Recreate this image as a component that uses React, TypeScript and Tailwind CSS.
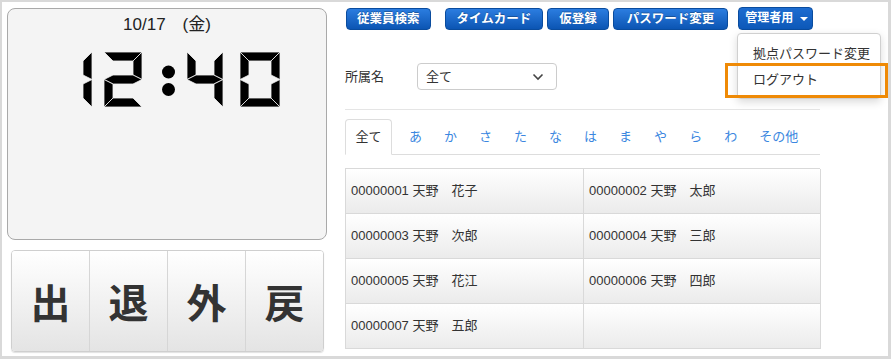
import React from "react";

type Pt = [number, number];

const FONT = { fontFamily: '"Liberation Sans", "Noto Sans CJK JP", sans-serif' };

// 7-segment polygons for a digit box w x h with segment thickness t
const segPolys = (w: number, h: number, t: number): Record<string, Pt[]> => {
  const m = h / 2;
  const s = t / 2;
  return {
    a: [[0, 0], [w, 0], [w - t, t], [t, t]],
    b: [[w, 0], [w, m], [w - t, m - s], [w - t, t]],
    c: [[w, m], [w, h], [w - t, h - t], [w - t, m + s]],
    d: [[0, h], [t, h - t], [w - t, h - t], [w, h]],
    e: [[0, m], [t, m + s], [t, h - t], [0, h]],
    f: [[0, 0], [t, t], [t, m - s], [0, m]],
    g: [[0, m], [t, m - s], [w - t, m - s], [w, m], [w - t, m + s], [t, m + s]],
  };
};

const Digit = ({ x, w, on }: { x: number; w: number; on: string }) => {
  const polys = segPolys(w, 55, 9);
  return (
    <g transform={`translate(${x},0)`}>
      {on.split("").map((k) => (
        <polygon
          key={k}
          points={polys[k].map((p) => p.join(",")).join(" ")}
          fill="#000"
          stroke="#f4f4f4"
          strokeWidth={0.8}
        />
      ))}
    </g>
  );
};

const Clock = () => (
  <svg width="202" height="56" viewBox="0 0 202 56" className="block ml-[72px] mt-[17px]" aria-label="12:40">
    <title>12:40</title>
    <Digit x={2} w={10} on="bc" />
    <Digit x={24} w={38} on="abged" />
    <circle cx="88.5" cy="20" r="6.5" fill="#000" />
    <circle cx="88.5" cy="37.5" r="6.5" fill="#000" />
    <Digit x={107} w={36} on="fgbc" />
    <Digit x={160} w={40} on="abcdef" />
  </svg>
);

const blueBtn =
  "shrink-0 whitespace-nowrap h-[22px] rounded-[4px] border border-[#0a4c9e] bg-gradient-to-b from-[#2b7de0] to-[#0b55b3] text-white text-[12.5px] font-bold leading-[20px] [text-shadow:0_-1px_0_rgba(0,0,0,0.25)]";

const kana = ["あ", "か", "さ", "た", "な", "は", "ま", "や", "ら", "わ", "その他"];

const staff: (string | null)[] = [
  "00000001 天野　花子",
  "00000002 天野　太郎",
  "00000003 天野　次郎",
  "00000004 天野　三郎",
  "00000005 天野　花江",
  "00000006 天野　四郎",
  "00000007 天野　五郎",
  null,
];

export default function App() {
  return (
    <div
      className="relative w-[891px] h-[359px] overflow-hidden bg-white border-l-2 border-t-2 border-r-[3px] border-b-[3px] border-[#d9d9d9] flex text-[#333]"
      style={FONT}
    >
      {/* left: clock + stamp buttons */}
      <div className="w-[343px] shrink-0 pl-[5px] pt-[6px]">
        <div className="w-[320px] h-[232px] rounded-[8px] border border-[#a9a9a9] bg-[#f4f4f4] pt-[6px]">
          <div className="text-center text-[17px] leading-[20px] text-[#222]">10/17　(金)</div>
          <Clock />
        </div>
        <div className="mt-[10px] ml-[4px] w-[313px] h-[102px] flex rounded-[4px] border border-[#cfcfcf] overflow-hidden shadow-[0_1px_1px_rgba(0,0,0,0.12)]">
          {["出", "退", "外", "戻"].map((c, i) => (
            <div
              key={c}
              className={`flex-1 flex items-center justify-center bg-gradient-to-b from-[#ffffff] to-[#e4e4e4] text-[40px] font-bold text-[#333] ${
                i > 0 ? "border-l border-[#d6d6d6]" : ""
              }`}
              style={{ fontFamily: '"Noto Sans CJK JP", sans-serif' }}
            >
              {c}
            </div>
          ))}
        </div>
      </div>

      {/* right: menu, filter, tabs, table */}
      <div className="w-[475px] shrink-0 pt-[5px]">
        <div className="flex items-center w-[540px]">
          <button className={`${blueBtn} px-[10px] ml-[1px]`}>従業員検索</button>
          <button className={`${blueBtn} px-[11px] ml-[14px]`}>タイムカード</button>
          <button className={`${blueBtn} px-[11px] ml-[4px]`}>仮登録</button>
          <button className={`${blueBtn} px-[13px] ml-[4px]`}>パスワード変更</button>
          <button className="shrink-0 whitespace-nowrap ml-[10px] h-[23px] pl-[6px] pr-[4px] rounded-[4px] border border-[#0a4c9e] bg-gradient-to-b from-[#1d6cd0] to-[#0c58b8] text-white text-[12px] font-bold leading-[21px] flex items-center">
            管理者用
            <span className="ml-[7px] w-0 h-0 border-l-[4px] border-r-[4px] border-t-[4px] border-l-transparent border-r-transparent border-t-white" />
          </button>
        </div>

        <div className="flex items-center mt-[33px] h-[27px] text-[13px]">
          <span className="w-[72px]">所属名</span>
          <div className="w-[140px] h-[27px] rounded-[4px] border border-[#cccccc] flex items-center pl-[8px] pr-[12px] justify-between">
            <span>全て</span>
            <svg width="12" height="8" viewBox="0 0 12 8">
              <path d="M1.5 1.5 L6 6 L10.5 1.5" fill="none" stroke="#444" strokeWidth="1.6" />
            </svg>
          </div>
        </div>

        <div className="mt-[19px] border-t border-[#e5e5e5]" />

        <div className="mt-[9px] flex items-end h-[36px] border-b border-[#dddddd] text-[13px]">
          <div className="h-[36px] w-[47px] -mb-px rounded-t-[4px] border border-[#dddddd] border-b-white bg-white flex items-center justify-center text-[#333]">
            全て
          </div>
          <div className="flex ml-[6px] text-[#3b87e0]">
            {kana.map((k) => (
              <span key={k} className="h-[35px] px-[11px] flex items-center">
                {k}
              </span>
            ))}
          </div>
        </div>

        <div className="mt-[13px] grid grid-cols-[238px_237px] border-l border-t border-[#d9d9d9] text-[13px]">
          {staff.map((s, i) => (
            <div
              key={i}
              className="h-[45px] border-r border-b border-[#d9d9d9] bg-gradient-to-b from-[#ffffff] to-[#ebebeb] flex items-center pl-[5px] text-[#333]"
            >
              {s}
            </div>
          ))}
        </div>
      </div>

      {/* open admin dropdown */}
      <div className="absolute left-[735px] top-[31px] w-[144px] h-[66px] rounded-[4px] border border-[#d0d0d0] bg-white shadow-[0_3px_8px_rgba(0,0,0,0.15)] text-[13px] text-[#333] pt-[7px]">
        <div className="h-[26px] leading-[26px] pl-[15px] whitespace-nowrap">拠点パスワード変更</div>
        <div className="h-[26px] leading-[26px] pl-[15px] whitespace-nowrap">ログアウト</div>
      </div>
      <div className="absolute left-[723px] top-[61px] w-[163px] h-[35px] border-[3px] border-[#ef8a06]" />
    </div>
  );
}
